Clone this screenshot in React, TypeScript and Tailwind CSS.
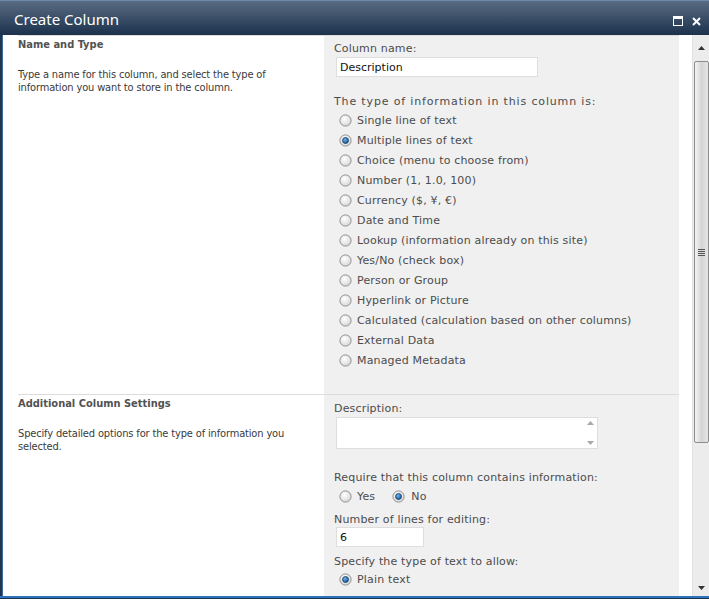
import React from "react";

const Radio = ({ checked = false }: { checked?: boolean }) => (
  <svg width="13" height="13" viewBox="0 0 13 13" className="shrink-0">
    <defs>
      <radialGradient id={checked ? "rgc" : "rgu"} cx="0.4" cy="0.35" r="0.7">
        <stop offset="0" stopColor="#ffffff" />
        <stop offset="1" stopColor="#d6d6d6" />
      </radialGradient>
      <radialGradient id="dot" cx="0.4" cy="0.35" r="0.7">
        <stop offset="0" stopColor="#6fb4ec" />
        <stop offset="1" stopColor="#0b4f91" />
      </radialGradient>
    </defs>
    <circle cx="6.5" cy="6.5" r="5.6" fill={`url(#${checked ? "rgc" : "rgu"})`} stroke="#8e8f8f" strokeWidth="1" />
    {checked && <circle cx="6.5" cy="6.5" r="3" fill="url(#dot)" stroke="#1c3d63" strokeWidth="0.8" />}
  </svg>
);

const types = [
  "Single line of text",
  "Multiple lines of text",
  "Choice (menu to choose from)",
  "Number (1, 1.0, 100)",
  "Currency ($, ¥, €)",
  "Date and Time",
  "Lookup (information already on this site)",
  "Yes/No (check box)",
  "Person or Group",
  "Hyperlink or Picture",
  "Calculated (calculation based on other columns)",
  "External Data",
  "Managed Metadata",
];

const rightFont = { fontFamily: '"DejaVu Sans", Verdana, sans-serif' };
const leftFont = { fontFamily: '"DejaVu Sans Condensed", "DejaVu Sans", Tahoma, sans-serif' };

export default function App() {
  return (
    <div className="w-[709px] h-[599px] overflow-hidden bg-white flex flex-col">
      {/* Title bar */}
      <div className="h-[35px] shrink-0 flex items-center justify-between bg-gradient-to-b from-[#5a6c83] to-[#1c324c] border-t border-[#6c8aab]">
        <div className="pl-[14px] text-white text-[15px] leading-none pt-[2px]" style={{ fontFamily: '"Noto Sans", "Open Sans", sans-serif' }}>
          Create Column
        </div>
        <div className="flex items-center gap-[9px] pr-[8px] pt-[6px]">
          <div className="w-[10px] h-[10px] border border-white border-t-[3px]" />
          <svg width="9" height="9" viewBox="0 0 9 9">
            <path d="M1 1 L8 8 M8 1 L1 8" stroke="#fff" strokeWidth="2" />
          </svg>
        </div>
      </div>

      <div className="flex flex-1 min-h-0">
        {/* left frame */}
        <div className="w-[3px] shrink-0 bg-[#22364f] border-r border-[#3d6a9a]" />

        {/* content */}
        <div className="w-[676px] shrink-0 flex flex-col min-h-0">
          <div className="ml-[15px] h-px bg-[#dcdcdc] shrink-0" />
          {/* Section 1 */}
          <div className="flex h-[358px] shrink-0">
            <div className="w-[321px] shrink-0 pl-[15px] pt-[2px] text-[11px] leading-[13px]" style={leftFont}>
              <div className="font-bold text-[#525252]">Name and Type</div>
              <div className="mt-[17px] text-[#3a3a3a] pr-[40px] tracking-[-0.15px]">
                Type a name for this column, and select the type of information you want to store in the column.
              </div>
            </div>
            <div className="flex-1 bg-[#f0f0f0] pl-[10px] pt-[6px] text-[11px] leading-[13px] text-[#4c4c4c] tracking-[0.17px]" style={rightFont}>
              <div>Column name:</div>
              <div className="ml-[2px] mt-[2px] w-[202px] h-[20px] bg-white border border-[#dedede] flex items-center px-[3px] text-[#111] tracking-normal">
                Description
              </div>
              <div className="mt-[18px] tracking-[0.85px]">The type of information in this column is:</div>
              <div className="mt-[2px] flex flex-col">
                {types.map((t, i) => (
                  <div key={t} className="h-[20px] flex items-center gap-[5px] pl-[5px]">
                    <Radio checked={i === 1} />
                    <span>{t}</span>
                  </div>
                ))}
              </div>
            </div>
          </div>
          <div className="ml-[15px] h-px bg-[#dcdcdc] shrink-0" />
          {/* Section 2 */}
          <div className="flex flex-1 min-h-0">
            <div className="w-[321px] shrink-0 pl-[15px] pt-[2px] text-[11px] leading-[13px]" style={leftFont}>
              <div className="font-bold text-[#525252]">Additional Column Settings</div>
              <div className="mt-[17px] text-[#3a3a3a] pr-[30px] tracking-[-0.15px]">
                Specify detailed options for the type of information you selected.
              </div>
            </div>
            <div className="flex-1 bg-[#f0f0f0] pl-[10px] pt-[7px] text-[11px] leading-[13px] text-[#4c4c4c] overflow-hidden tracking-[0.17px]" style={rightFont}>
              <div>Description:</div>
              <div className="ml-[2px] mt-[2px] w-[262px] h-[32px] bg-white border border-[#dedede] flex justify-end">
                <div className="w-[14px] flex flex-col items-center justify-between py-[3px]">
                  <svg width="7" height="4" viewBox="0 0 7 4"><path d="M0 4 L3.5 0 L7 4Z" fill="#a8a8a8" /></svg>
                  <svg width="7" height="4" viewBox="0 0 7 4"><path d="M0 0 L3.5 4 L7 0Z" fill="#a8a8a8" /></svg>
                </div>
              </div>
              <div className="mt-[22px]">Require that this column contains information:</div>
              <div className="mt-[2px] h-[20px] flex items-center pl-[5px]">
                <Radio />
                <span className="ml-[5px]">Yes</span>
                <span className="ml-[17px]"><Radio checked /></span>
                <span className="ml-[6px]">No</span>
              </div>
              <div className="mt-[7px]">Number of lines for editing:</div>
              <div className="ml-[2px] mt-[1px] w-[88px] h-[20px] bg-white border border-[#dedede] flex items-center px-[3px] text-[#111]">
                6
              </div>
              <div className="mt-[8px]">Specify the type of text to allow:</div>
              <div className="mt-[1px] flex flex-col">
                <div className="h-[20px] flex items-center gap-[5px] pl-[5px]">
                  <Radio checked />
                  <span>Plain text</span>
                </div>
                <div className="h-[20px] flex items-center gap-[5px] pl-[5px] pt-[6px]">
                  <Radio />
                </div>
              </div>
            </div>
          </div>
        </div>

        {/* white gutter */}
        <div className="w-[13px] shrink-0 bg-white" />

        {/* scrollbar */}
        <div className="w-[17px] shrink-0 bg-[#ececec] border-l border-[#e2e2e2] flex flex-col items-center">
          <div className="h-[26px] w-full flex items-center justify-center">
            <svg width="7" height="4" viewBox="0 0 7 4"><path d="M0 4 L3.5 0 L7 4Z" fill="#333" /></svg>
          </div>
          <div className="w-[15px] h-[382px] rounded-[2px] border border-[#8b8b8b] bg-gradient-to-r from-[#f4f4f4] via-[#d4d4d4] to-[#e6e6e6] flex items-center justify-center">
            <div className="flex flex-col gap-[1px]">
              <div className="w-[7px] h-px bg-[#555]" />
              <div className="w-[7px] h-px bg-[#555]" />
              <div className="w-[7px] h-px bg-[#555]" />
              <div className="w-[7px] h-px bg-[#555]" />
            </div>
          </div>
          <div className="flex-1" />
          <div className="h-[16px] w-full flex items-center justify-center">
            <svg width="7" height="4" viewBox="0 0 7 4"><path d="M0 0 L3.5 4 L7 0Z" fill="#333" /></svg>
          </div>
        </div>
      </div>

      {/* bottom frame */}
      <div className="h-[3px] shrink-0 bg-[#2d72bd] border-b border-[#1a3350]" />
    </div>
  );
}
